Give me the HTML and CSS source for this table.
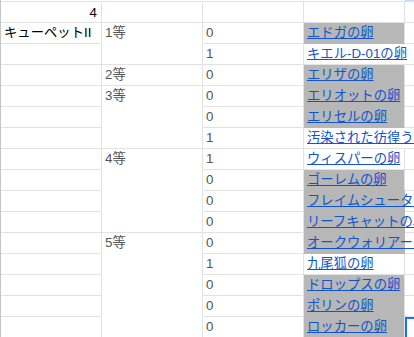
FILE: index.html
```html
<!DOCTYPE html>
<html lang="ja">
<head>
<meta charset="utf-8">
<title>Sheet</title>
<link rel="stylesheet" href="styles.css">
</head>
<body>
<div class="sheet">
  <div class="c hd num">4</div>
  <div class="c hd"></div>
  <div class="c hd"></div>
  <div class="c hd"></div>
  <div class="c hd e top-sel"></div>

  <div class="c name">キューペットII</div>
  <div class="c g span2">1等</div>
  <div class="c g">0</div>
  <div class="c d gray"><a href="#">エドガの卵</a></div>
  <div class="c e"></div>

  <div class="c"></div>
  <div class="c g">1</div>
  <div class="c d spill"><a href="#">キエル-D-01の卵</a></div>
  <div class="c e"></div>

  <div class="c"></div>
  <div class="c g">2等</div>
  <div class="c g">0</div>
  <div class="c d gray"><a href="#">エリザの卵</a></div>
  <div class="c e"></div>

  <div class="c"></div>
  <div class="c g span3">3等</div>
  <div class="c g">0</div>
  <div class="c d gray"><a href="#">エリオットの卵</a></div>
  <div class="c e"></div>

  <div class="c"></div>
  <div class="c g">0</div>
  <div class="c d gray"><a href="#">エリセルの卵</a></div>
  <div class="c e"></div>

  <div class="c"></div>
  <div class="c g">1</div>
  <div class="c d spill"><a href="#">汚染された彷徨う者の卵</a></div>
  <div class="c e"></div>

  <div class="c"></div>
  <div class="c g span4">4等</div>
  <div class="c g">1</div>
  <div class="c d"><a href="#">ウィスパーの卵</a></div>
  <div class="c e"></div>

  <div class="c"></div>
  <div class="c g">0</div>
  <div class="c d gray"><a href="#">ゴーレムの卵</a></div>
  <div class="c e"></div>

  <div class="c"></div>
  <div class="c g">0</div>
  <div class="c d gray spill"><a href="#">フレイムシューターの卵</a></div>
  <div class="c e"></div>

  <div class="c"></div>
  <div class="c g">0</div>
  <div class="c d gray spill"><a href="#">リーフキャットの卵</a></div>
  <div class="c e"></div>

  <div class="c"></div>
  <div class="c g span5">5等</div>
  <div class="c g">0</div>
  <div class="c d gray spill"><a href="#">オークウォリアーの卵</a></div>
  <div class="c e"></div>

  <div class="c"></div>
  <div class="c g">1</div>
  <div class="c d"><a href="#">九尾狐の卵</a></div>
  <div class="c e"></div>

  <div class="c"></div>
  <div class="c g">0</div>
  <div class="c d gray"><a href="#">ドロップスの卵</a></div>
  <div class="c e"></div>

  <div class="c"></div>
  <div class="c g">0</div>
  <div class="c d gray"><a href="#">ポリンの卵</a></div>
  <div class="c e"></div>

  <div class="c"></div>
  <div class="c g">0</div>
  <div class="c d gray"><a href="#">ロッカーの卵</a></div>
  <div class="c e selected"></div>
</div>
</body>
</html>
```

FILE: styles.css
```css
html, body {
  margin: 0;
  padding: 0;
  background: #ffffff;
  overflow: hidden;
}

.sheet {
  display: grid;
  grid-template-columns: 101px 101px 101px 101px 1fr;
  grid-template-rows: 22px repeat(15, 21px);
  padding-top: 1px;
  border-left: 1px solid #c4c4c4;
  font-family: "Liberation Sans", "Noto Sans CJK JP", sans-serif;
  font-size: 13.33px;
  line-height: 17px;
  color: #000000;
}

.c {
  box-sizing: border-box;
  border-right: 1px solid #e2e2e2;
  border-bottom: 1px solid #e2e2e2;
  padding: 1px 3px 0 3px;
  white-space: nowrap;
  min-width: 0;
}

.hd {
  border-top: 1px solid #e2e2e2;
  padding-top: 2px;
}

.num {
  text-align: right;
  padding-right: 4px;
}

.name {
  color: #000000;
}

.g {
  color: #555555;
}

.span2 { grid-row: span 2; }
.span3 { grid-row: span 3; }
.span4 { grid-row: span 4; }
.span5 { grid-row: span 5; }

.d a {
  color: #1155cc;
  text-decoration: underline;
}

.gray {
  background: #b7b7b7;
  border-bottom-color: #b7b7b7;
}

.spill {
  border-right-color: transparent;
}

.e {
  border-right: none;
}

.top-sel {
  box-shadow: 0 -1px 0 #c9daf8;
}

.selected {
  border-bottom: none;
  box-shadow: inset 2px 2px 0 0 #1a73e8;
}
```
